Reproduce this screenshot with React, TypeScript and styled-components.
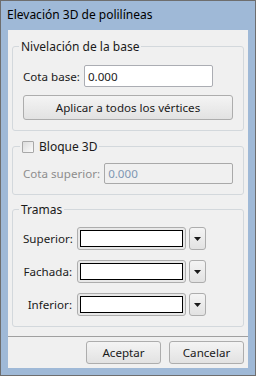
import styled, { createGlobalStyle } from 'styled-components'

const GlobalStyle = createGlobalStyle`
  html, body {
    margin: 0;
    padding: 0;
    background: #ffffff;
  }
  body {
    font-family: 'Noto Sans', 'Liberation Sans', sans-serif;
    font-size: 11.6px;
    color: #1a1a1a;
  }
`

const App = () => {
  return (
    <>
      <GlobalStyle />
      <Window>
        <TitleBar>Elevación 3D de polilíneas</TitleBar>
        <Body>
          <Group>
            <Legend>Nivelación de la base</Legend>
            <FieldRow>
              <Label>Cota base:</Label>
              <TextInput defaultValue="0.000" $width={129} />
            </FieldRow>
            <WideButton>Aplicar a todos los vértices</WideButton>
          </Group>

          <Group $gap={15}>
            <CheckLegend>
              <CheckBox />
              <span>Bloque 3D</span>
            </CheckLegend>
            <FieldRow $top={9}>
              <Label $disabled>Cota superior:</Label>
              <TextInput defaultValue="0.000" disabled />
            </FieldRow>
          </Group>

          <Group $gap={14}>
            <Legend>Tramas</Legend>
            <PatternList>
              {['Superior:', 'Fachada:', 'Inferior:'].map((name) => (
                <PatternRow key={name}>
                  <PatternLabel>{name}</PatternLabel>
                  <ColorBox>
                    <ColorSwatch />
                  </ColorBox>
                  <DropButton>
                    <svg width="7" height="4" viewBox="0 0 7 4">
                      <path d="M0 0h7L3.5 4z" fill="#1a1a1a" />
                    </svg>
                  </DropButton>
                </PatternRow>
              ))}
            </PatternList>
          </Group>

          <Footer>
            <DialogButton>Aceptar</DialogButton>
            <DialogButton>Cancelar</DialogButton>
          </Footer>
        </Body>
      </Window>
    </>
  )
}

export default App

/* ****************************************************************
  Diálogo de elevación 3D (estilo Windows 7 básico)
*******************************************************************/

const Window = styled.div`
  box-sizing: border-box;
  width: 256px;
  height: 376px;
  border: 1px solid #6e6e6e;
  background: #9fb9d7;
  display: flex;
  flex-direction: column;
`

const TitleBar = styled.div`
  height: 29px;
  line-height: 28px;
  padding-left: 6px;
  font-size: 12px;
  color: #000000;
  flex-shrink: 0;
`

const Body = styled.div`
  flex: 1;
  margin: 0 7px 7px 7px;
  background: #f0f0f0;
  padding: 16px 4px 0 4px;
  display: flex;
  flex-direction: column;
`

const Group = styled.div<{ $gap?: number }>`
  margin-top: ${(p) => p.$gap ?? 0}px;
  border: 1px solid #d3d8dc;
  border-radius: 3px;
  padding: 0 10px 10px 10px;
  display: flex;
  flex-direction: column;
`

const Legend = styled.div`
  align-self: flex-start;
  margin: -8px 0 0 -4px;
  padding: 0 2px;
  height: 15px;
  line-height: 15px;
  font-size: 12px;
  background: #f0f0f0;
`

const CheckLegend = styled(Legend)`
  display: flex;
  align-items: center;
  gap: 5px;
  margin-left: -3px;
`

const CheckBox = styled.span`
  box-sizing: border-box;
  width: 12px;
  height: 12px;
  border: 1px solid #a8a8a8;
  border-radius: 1px;
  background: linear-gradient(135deg, #dcdcdc, #fbfbfb);
`

const FieldRow = styled.div<{ $top?: number }>`
  display: flex;
  align-items: center;
  margin-top: ${(p) => p.$top ?? 11}px;
`

const Label = styled.span<{ $disabled?: boolean }>`
  margin-right: 4px;
  white-space: nowrap;
  color: ${(p) => (p.$disabled ? '#8d8d8d' : '#1a1a1a')};
`

const TextInput = styled.input<{ $width?: number }>`
  box-sizing: border-box;
  height: 22px;
  ${(p) => (p.$width ? `width: ${p.$width}px;` : 'flex: 1; min-width: 0;')}
  border: 1px solid #abadb3;
  border-radius: 2px;
  padding: 0 3px;
  font: inherit;
  color: #1a1a1a;
  background: #ffffff;

  &:disabled {
    height: 21px;
    background: #f0f0f0;
    border-color: #a9a9a9;
    color: #7f97b3;
  }
`

const buttonFace = `
  box-sizing: border-box;
  border: 1px solid #adadad;
  border-radius: 3px;
  background: linear-gradient(#f4f4f4, #e2e2e2);
  font: inherit;
  color: #1a1a1a;
  padding: 0;
`

const WideButton = styled.button`
  ${buttonFace}
  margin-top: 8px;
  height: 25px;
`

const PatternList = styled.div`
  display: flex;
  flex-direction: column;
  gap: 10px;
  margin-top: 10px;
`

const PatternRow = styled.div`
  display: flex;
  align-items: center;
  height: 23px;
`

const PatternLabel = styled.span`
  width: 49px;
  text-align: right;
  margin-right: 5px;
`

const ColorBox = styled.div`
  box-sizing: border-box;
  width: 109px;
  height: 23px;
  border: 1px solid #adadad;
  border-radius: 3px;
  padding: 2px;
  background: #e8e8e8;
`

const ColorSwatch = styled.div`
  box-sizing: border-box;
  height: 100%;
  border: 1px solid #000000;
  background: #ffffff;
`

const DropButton = styled.div`
  ${buttonFace}
  width: 17px;
  height: 23px;
  margin-left: 3px;
  display: flex;
  align-items: center;
  justify-content: center;
`

const Footer = styled.div`
  margin: 9px -4px 0 -4px;
  border-top: 1px solid #a0a0a0;
  padding: 4px 4px 0 0;
  display: flex;
  justify-content: flex-end;
  gap: 8px;
`

const DialogButton = styled.button`
  ${buttonFace}
  width: 75px;
  height: 23px;
`
